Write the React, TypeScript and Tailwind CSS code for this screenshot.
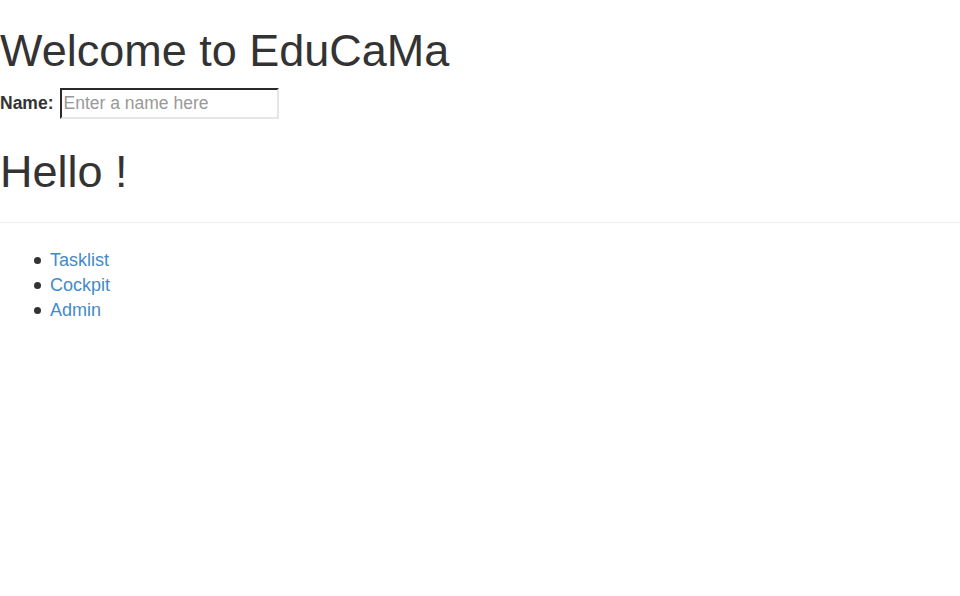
import { useState } from "react";

const links = ["Tasklist", "Cockpit", "Admin"];

const App = () => {
    const [name, setName] = useState("");

    return (
        <div className="min-h-screen bg-white text-[#333] text-[17.5px] leading-[25px]" style={{ fontFamily: '"Liberation Sans", Arial, sans-serif' }}>
            <h1 className="text-[45px] leading-[49.5px] font-normal pt-[26px] mb-[12.5px]">Welcome to EduCaMa</h1>

            <div className="flex items-center">
                <label className="font-bold mr-[6px]">Name:</label>
                <input
                    type="text"
                    value={name}
                    onChange={(e) => setName(e.target.value)}
                    placeholder="Enter a name here"
                    className="w-[219px] h-[31px] px-[2px] border-2 border-t-[#2a2a2a] border-l-[#2a2a2a] border-r-[#e6e6e6] border-b-[#e6e6e6] placeholder:text-[#999] outline-none"
                />
            </div>

            <h1 className="text-[45px] leading-[49.5px] font-normal mt-[28px]">Hello {name}!</h1>

            <hr className="mt-[25px] mb-[25px] border-0 border-t border-t-[#eee]" />

            <ul className="pl-[34px] text-[18px]">
                {links.map((l) => (
                    <li key={l} className="flex items-center">
                        <span className="w-[7px] h-[7px] rounded-full bg-[#333] mr-[9px]" />
                        <a href="#" className="text-[#428bca]">{l}</a>
                    </li>
                ))}
            </ul>
        </div>
    );
};

export default App;
